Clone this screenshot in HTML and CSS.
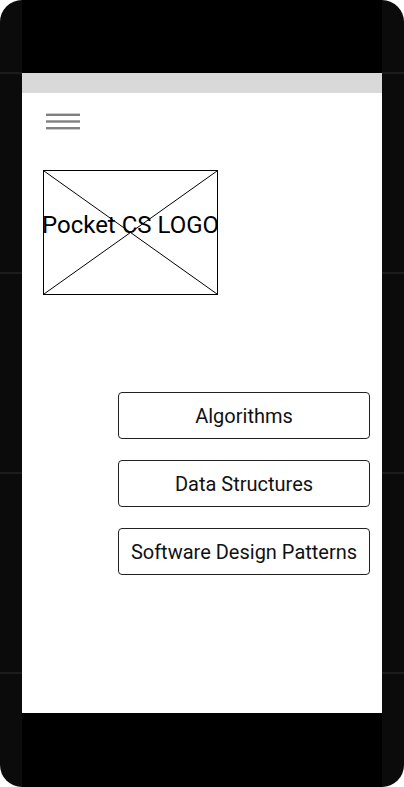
FILE: index.html
```html
<!DOCTYPE html>
<html>
<head>
<meta charset="utf-8">
<link rel="stylesheet" href="styles.css">
</head>
<body>
<div class="phone">
  <div class="screen-col">
    <div class="bezel-top"></div>
    <div class="status-bar"></div>
    <div class="screen">
      <svg class="menu-icon" width="34" height="17" viewBox="0 0 34 17">
        <rect x="0" y="0.6" width="34" height="2.4" fill="#808080"/>
        <rect x="0" y="7.3" width="34" height="2.4" fill="#808080"/>
        <rect x="0" y="14" width="34" height="2.4" fill="#808080"/>
      </svg>
      <div class="logo">
        <svg class="logo-x" viewBox="0 0 173 123" preserveAspectRatio="none">
          <line x1="0" y1="0" x2="173" y2="123" stroke="#000" stroke-width="1"/>
          <line x1="173" y1="0" x2="0" y2="123" stroke="#000" stroke-width="1"/>
        </svg>
        <span class="logo-text">Pocket CS LOGO</span>
      </div>
      <div class="menu">
        <button class="menu-btn">Algorithms</button>
        <button class="menu-btn">Data Structures</button>
        <button class="menu-btn">Software Design Patterns</button>
      </div>
    </div>
    <div class="bezel-bottom"></div>
  </div>
</div>
</body>
</html>
```
FILE: styles.css
```css
* { box-sizing: border-box; }
html, body { margin: 0; padding: 0; background: #fff; }
body { font-family: Roboto, "Liberation Sans", sans-serif; }

.phone {
  width: 404px;
  height: 787px;
  border-radius: 22px;
  overflow: hidden;
  background: repeating-linear-gradient(to bottom, #0b0b0b 0 72px, #1c1c1c 72px 74px, #0b0b0b 74px 200px);
  display: flex;
  justify-content: center;
}

.screen-col {
  width: 360px;
  display: flex;
  flex-direction: column;
}

.bezel-top { height: 73px; background: #000; }
.status-bar { height: 20px; background: #d9d9d9; }
.screen {
  height: 620px;
  background: #fff;
  display: flex;
  flex-direction: column;
  align-items: flex-start;
  padding-top: 20px;
}
.bezel-bottom { flex: 1; background: #000; }

.menu-icon { display: block; margin-left: 24px; }

.logo {
  position: relative;
  margin-top: 40px;
  margin-left: 21px;
  width: 175px;
  height: 125px;
  border: 1px solid #000;
  display: flex;
  justify-content: center;
  align-items: flex-start;
  padding-top: 40px;
}
.logo-x {
  position: absolute;
  left: 0; top: 0;
  width: 100%;
  height: 100%;
}
.logo-text {
  position: relative;
  font-size: 24px;
  white-space: nowrap;
  color: #000;
  line-height: 28px;
}

.menu {
  margin-top: 97px;
  margin-left: 96px;
  display: flex;
  flex-direction: column;
  gap: 21px;
}
.menu-btn {
  width: 252px;
  height: 47px;
  border: 1px solid #222;
  border-radius: 4px;
  background: #fff;
  font-family: Roboto, "Liberation Sans", sans-serif;
  font-size: 20px;
  color: #111;
  padding: 0;
}
```
